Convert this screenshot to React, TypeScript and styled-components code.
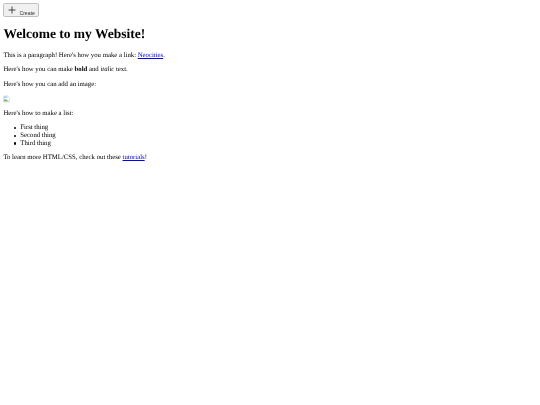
import React from "react";
import styled, {createGlobalStyle} from "styled-components";

const GlobalStyle = createGlobalStyle`
  html, body {
    margin: 0;
    background: #fff;
  }
  body {
    font-family: "Liberation Serif", serif;
    font-size: 6.75px;
    line-height: 7.75px;
    color: #000;
    text-rendering: geometricPrecision;
  }
`;

const Page = styled.main`
  padding: 3.4px 3.4px 0;
  filter: blur(0.25px);
`;

const CreateButton = styled.button`
  display: flex;
  align-items: center;
  gap: 3px;
  box-sizing: border-box;
  width: 36px;
  height: 14px;
  padding: 0 0 0 4px;
  background: #f0f0f0;
  border: 1px solid #c0c0c0;
  border-radius: 2px;
  font-family: "Liberation Sans", sans-serif;
  font-size: 5.2px;
  color: #333;

  > svg {
    margin-top: -1px;
  }

  > span {
    margin-top: 5px;
  }
`;

const Title = styled.h1`
  margin: 9px 0 10px;
  font-size: 13.5px;
  line-height: 15.5px;
  font-weight: bold;
`;

const Paragraph = styled.p`
  margin: 0 0 6.75px;

  a {
    color: #0000ee;
    text-decoration: underline;
  }
`;

const BrokenImage = styled.svg`
  display: block;
  width: 7px;
  height: 7.75px;
`;

const List = styled.ul`
  margin: 0 0 6.75px;
  padding-left: 16.9px;
  list-style: none;
`;

const ListItem = styled.li`
  position: relative;

  &::before {
    content: "";
    position: absolute;
    left: -6.6px;
    top: 2.6px;
    width: 2.4px;
    height: 2.4px;
    border-radius: 50%;
    background: #000;
  }
`;

export default function App() {
  return (
    <>
      <GlobalStyle/>
      <Page>
        <CreateButton>
          <svg width="8" height="8" viewBox="0 0 8 8">
            <path d="M4 .5v7M.5 4h7" stroke="#222" strokeWidth=".8" fill="none"/>
          </svg>
          <span>Create</span>
        </CreateButton>
        <Title>Welcome to my Website!</Title>
        <Paragraph>This is a paragraph! Here's how you make a link: <a href="#">Neocities</a>.</Paragraph>
        <Paragraph>Here's how you can make <b>bold</b> and <i>italic</i> text.</Paragraph>
        <Paragraph>Here's how you can add an image:</Paragraph>
        <Paragraph>
          <BrokenImage viewBox="0 0 8 8">
            <path d="M.5.5h5l2 2v5h-7z" fill="#fff" stroke="#c4c4c4" strokeWidth=".5"/>
            <path d="M1 7V5l2-1 2 1.5L7 7z" fill="#7dbb78"/>
            <path d="M1 1h4v2H3L1 4z" fill="#b7cdf0"/>
          </BrokenImage>
        </Paragraph>
        <Paragraph>Here's how to make a list:</Paragraph>
        <List>
          <ListItem>First thing</ListItem>
          <ListItem>Second thing</ListItem>
          <ListItem>Third thing</ListItem>
        </List>
        <Paragraph>To learn more HTML/CSS, check out these <a href="#">tutorials</a>!</Paragraph>
      </Page>
    </>
  );
}
